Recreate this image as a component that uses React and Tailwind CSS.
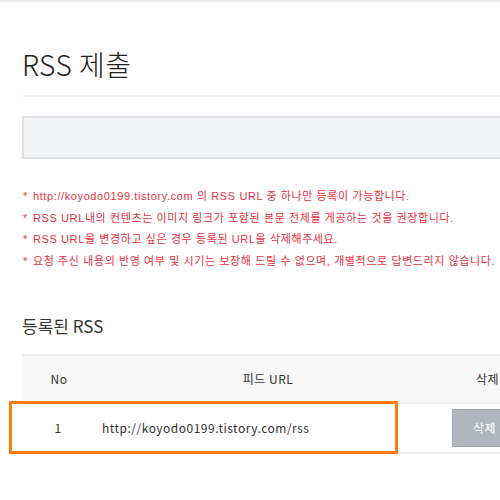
export default function App() {
  const notes = [
    "http://koyodo0199.tistory.com 의 RSS URL 중 하나만 등록이 가능합니다.",
    "RSS URL내의 컨텐츠는 이미지 링크가 포함된 본문 전체를 게공하는 것을 권장합니다.",
    "RSS URL을 변경하고 싶은 경우 등록된 URL을 삭제해주세요.",
    "요청 주신 내용의 반영 여부 및 시기는 보장해 드릴 수 없으며, 개별적으로 답변드리지 않습니다.",
  ];
  return (
    <div
      className="w-[500px] h-[500px] overflow-hidden bg-white relative"
      style={{ fontFamily: '"Noto Sans CJK KR", "Noto Sans", sans-serif' }}
    >
      <div className="h-[2px] bg-[#e9e9e9]" />
      <div className="pl-[22px] w-[560px]">
        <h1 className="pt-[42px] h-[93px] text-[28px] font-light text-[#222] leading-[40px] tracking-[0.5px]">
          RSS 제출
        </h1>
        <div className="h-[2px] bg-[#f2f2f2]" />
        <div className="mt-[19px] h-[43px] bg-[#f3f4f6] border-2 border-[#dfe0e5] border-r-0" />
        <ul
          className="mt-[27px] text-[11px] text-[#e8323f] leading-[21.7px] tracking-[0.6px]"
          style={{ fontFamily: '"Liberation Sans", "Noto Sans CJK KR", sans-serif' }}
        >
          {notes.map((n, i) => (
            <li key={i} className="flex whitespace-nowrap">
              <span className="w-[11px] pl-[1px]">*</span>
              <span>{n}</span>
            </li>
          ))}
        </ul>
        <h2 className="mt-[41px] text-[17px] text-[#333] leading-[24px]">등록된 RSS</h2>
        <div className="mt-[16px] border-t-2 border-[#ececec]">
          <div className="flex h-[48px] items-center bg-[#f8f8f8] border-b-2 border-[#f0f0f0] text-[12px] text-[#333] tracking-[0.5px]">
            <div className="w-[74px] text-center">No</div>
            <div className="w-[344px] text-center">피드 URL</div>
            <div className="w-[75px] pl-[20px] text-center">삭제</div>
          </div>
          <div className="flex h-[50px] items-center border-b-2 border-[#f0f0f0] text-[12px] text-[#333] tracking-[0.5px]">
            <div className="w-[72px] text-center">1</div>
            <div className="w-[358px] pl-[8px]">http://koyodo0199.tistory.com/rss</div>
            <button className="h-[38px] w-[80px] bg-[#aeb6bf] border border-[#9ea6b0] text-white text-[12px] text-left pl-[20px]">
              삭제
            </button>
          </div>
        </div>
      </div>
      <div className="absolute left-[9px] top-[401px] w-[389px] h-[53px] border-[3px] border-[#ff7c0a]" />
    </div>
  );
}
